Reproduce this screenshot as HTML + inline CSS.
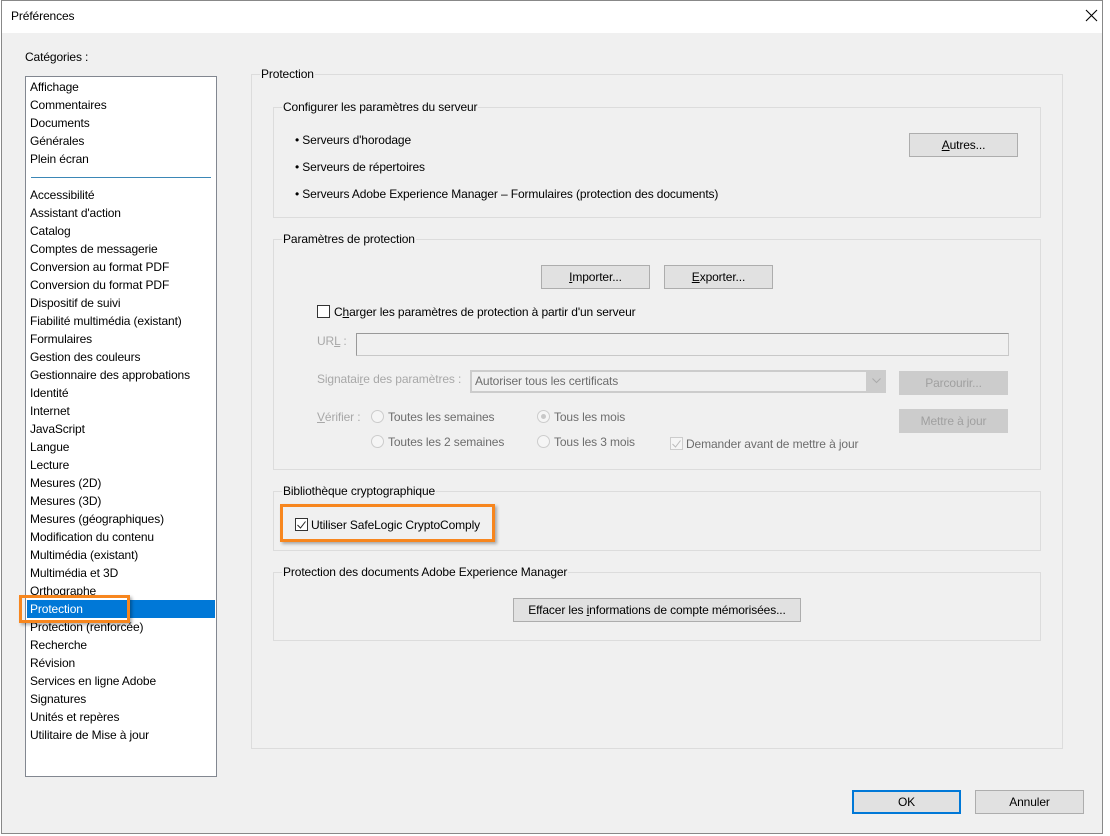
<!DOCTYPE html>
<html><head><meta charset="utf-8">
<style>
*{box-sizing:border-box;margin:0;padding:0}
body{width:1110px;height:836px;position:relative;background:#fff;font-family:"Liberation Sans",sans-serif;font-size:12px;letter-spacing:-0.12px;color:#000;overflow:hidden}
.a{position:absolute}
#dlg{left:1px;top:0;width:1102px;height:834px;border:1px solid #888;background:#f0f0f0}
#title{left:0;top:0;width:1100px;height:32px;background:#fff}
.grp{position:absolute;border:1px solid #dcdcdc}
.gt{position:absolute;top:-8px;left:8px;background:#f0f0f0;padding:0 1px;white-space:nowrap}
.btn{position:absolute;height:24px;border:1px solid #adadad;background:#e1e1e1;text-align:center;line-height:22px}
.dis{color:#a0a0a0;border-color:#cccccc;background:#cccccc}
.dt{color:#a8a8a8}
.li{position:absolute;left:30px;height:18px;line-height:18px;white-space:nowrap}
.rad{position:absolute;width:13px;height:13px;border-radius:50%;border:1px solid #ccc;background:#f5f5f5}
.cb{position:absolute;width:13px;height:13px;border:1px solid #333;background:#fff}
u{text-decoration:underline}
</style></head><body>
<div id="dlg" class="a">
<div id="title" class="a"></div>
</div>
<div class="a" style="left:11px;top:9px;font-size:12px">Préférences</div>
<svg class="a" style="left:1085px;top:9px" width="13" height="13" viewBox="0 0 13 13"><path d="M1 1L12 12M12 1L1 12" stroke="#000" stroke-width="1.1" fill="none"/></svg>
<div class="a" style="left:25px;top:50px">Caté<u>g</u>ories :</div>

<div class="a" style="left:25px;top:76px;width:192px;height:701px;background:#fff;border:1px solid #828790"></div>
<div class="a" style="left:31px;top:177px;width:180px;height:1px;background:#3b87b6"></div>
<div class="a" style="left:27px;top:600px;width:188px;height:18px;background:#0078d7"></div>

<div class="li" style="top:78px">Affichage</div>
<div class="li" style="top:96px">Commentaires</div>
<div class="li" style="top:114px">Documents</div>
<div class="li" style="top:132px">Générales</div>
<div class="li" style="top:150px">Plein écran</div>
<div class="li" style="top:186px">Accessibilité</div>
<div class="li" style="top:204px">Assistant d'action</div>
<div class="li" style="top:222px">Catalog</div>
<div class="li" style="top:240px">Comptes de messagerie</div>
<div class="li" style="top:258px">Conversion au format PDF</div>
<div class="li" style="top:276px">Conversion du format PDF</div>
<div class="li" style="top:294px">Dispositif de suivi</div>
<div class="li" style="top:312px">Fiabilité multimédia (existant)</div>
<div class="li" style="top:330px">Formulaires</div>
<div class="li" style="top:348px">Gestion des couleurs</div>
<div class="li" style="top:366px">Gestionnaire des approbations</div>
<div class="li" style="top:384px">Identité</div>
<div class="li" style="top:402px">Internet</div>
<div class="li" style="top:420px">JavaScript</div>
<div class="li" style="top:438px">Langue</div>
<div class="li" style="top:456px">Lecture</div>
<div class="li" style="top:474px">Mesures (2D)</div>
<div class="li" style="top:492px">Mesures (3D)</div>
<div class="li" style="top:510px">Mesures (géographiques)</div>
<div class="li" style="top:528px">Modification du contenu</div>
<div class="li" style="top:546px">Multimédia (existant)</div>
<div class="li" style="top:564px">Multimédia et 3D</div>
<div class="li" style="top:582px">Orthographe</div>
<div class="li" style="top:600px;color:#fff">Protection</div>
<div class="li" style="top:618px">Protection (renforcée)</div>
<div class="li" style="top:636px">Recherche</div>
<div class="li" style="top:654px">Révision</div>
<div class="li" style="top:672px">Services en ligne Adobe</div>
<div class="li" style="top:690px">Signatures</div>
<div class="li" style="top:708px">Unités et repères</div>
<div class="li" style="top:726px">Utilitaire de Mise à jour</div>
<div class="a" style="left:19px;top:595px;width:111px;height:28px;border:3px solid #f7861e;box-shadow:2px 2px 3px rgba(0,0,0,.3)"></div>

<div class="grp" style="left:251px;top:74px;width:812px;height:675px"><div class="gt">Protection</div></div>

<div class="grp" style="left:273px;top:107px;width:768px;height:111px"><div class="gt">Configurer les paramètres du serveur</div></div>
<div class="a" style="left:295px;top:133px">• Serveurs d'horodage</div>
<div class="a" style="left:295px;top:160px">• Serveurs de répertoires</div>
<div class="a" style="left:295px;top:187px">• Serveurs Adobe Experience Manager – Formulaires (protection des documents)</div>
<div class="btn" style="left:909px;top:133px;width:109px"><u>A</u>utres...</div>

<div class="grp" style="left:273px;top:239px;width:768px;height:231px"><div class="gt">Paramètres de protection</div></div>
<div class="btn" style="left:541px;top:265px;width:109px"><u>I</u>mporter...</div>
<div class="btn" style="left:664px;top:265px;width:109px"><u>E</u>xporter...</div>
<div class="cb" style="left:317px;top:305px"></div>
<div class="a" style="left:334px;top:305px">C<u>h</u>arger les paramètres de protection à partir d'un serveur</div>
<div class="a dt" style="left:317px;top:334px">UR<u>L</u> :</div>
<div class="a" style="left:356px;top:333px;width:653px;height:23px;border:1px solid #c8c8c8;border-left-color:#999;border-top-color:#999;background:#f0f0f0"></div>
<div class="a dt" style="left:317px;top:372px">Signatai<u>r</u>e des paramètres :</div>
<div class="a" style="left:470px;top:370px;width:416px;height:23px;border:1px solid #ccc;background:#ccc"></div>
<div class="a" style="left:472px;top:372px;width:394px;height:19px;background:#f0f0f0;color:#6d6d6d;line-height:19px;padding-left:3px">Autoriser tous les certificats</div>
<svg class="a" style="left:872px;top:378px" width="9" height="6" viewBox="0 0 9 6"><path d="M0.5 0.5L4.5 4.5L8.5 0.5" stroke="#aaa" fill="none"/></svg>
<div class="btn dis" style="left:899px;top:371px;width:109px">Parcourir...</div>
<div class="btn dis" style="left:899px;top:409px;width:109px">Mettre à jour</div>
<div class="a dt" style="left:317px;top:410px"><u>V</u>érifier :</div>
<div class="rad" style="left:371px;top:410px"></div><div class="a dt" style="left:388px;top:410px;color:#6d6d6d">Toutes les semaines</div>
<div class="rad" style="left:537px;top:410px"></div><div class="a" style="left:541px;top:414px;width:5px;height:5px;border-radius:50%;background:#c8c8c8"></div><div class="a" style="left:554px;top:410px;color:#6d6d6d">Tous les mois</div>
<div class="rad" style="left:371px;top:435px"></div><div class="a" style="left:388px;top:435px;color:#6d6d6d">Toutes les 2 semaines</div>
<div class="rad" style="left:537px;top:435px"></div><div class="a" style="left:554px;top:435px;color:#6d6d6d">Tous les 3 mois</div>
<div class="cb" style="left:670px;top:437px;border-color:#ccc;background:#f5f5f5"></div>
<svg class="a" style="left:672px;top:440px" width="9" height="8" viewBox="0 0 9 8"><path d="M0.5 4L3.5 7L8.5 0.5" stroke="#bbb" fill="none"/></svg>
<div class="a" style="left:686px;top:437px;color:#6d6d6d">Demander avant de mettre à jour</div>

<div class="grp" style="left:273px;top:491px;width:768px;height:60px"><div class="gt">Bibliothèque cryptographique</div></div>
<div class="cb" style="left:295px;top:518px"></div>
<svg class="a" style="left:297px;top:521px" width="9" height="8" viewBox="0 0 9 8"><path d="M0.5 4L3.5 7L8.5 0.5" stroke="#222" fill="none"/></svg>
<div class="a" style="left:311px;top:518px">Utiliser SafeLogic CryptoComply</div>
<div class="a" style="left:280px;top:504px;width:215px;height:38px;border:3px solid #f7861e;box-shadow:2px 2px 3px rgba(0,0,0,.3)"></div>

<div class="grp" style="left:273px;top:572px;width:768px;height:69px"><div class="gt">Protection des documents Adobe Experience Manager</div></div>
<div class="btn" style="left:513px;top:598px;width:288px">Effacer les <u>i</u>nformations de compte mémorisées...</div>

<div class="btn" style="left:852px;top:790px;width:109px;border:2px solid #0078d7;line-height:20px">OK</div>
<div class="btn" style="left:975px;top:790px;width:109px">Annuler</div>
</body></html>
